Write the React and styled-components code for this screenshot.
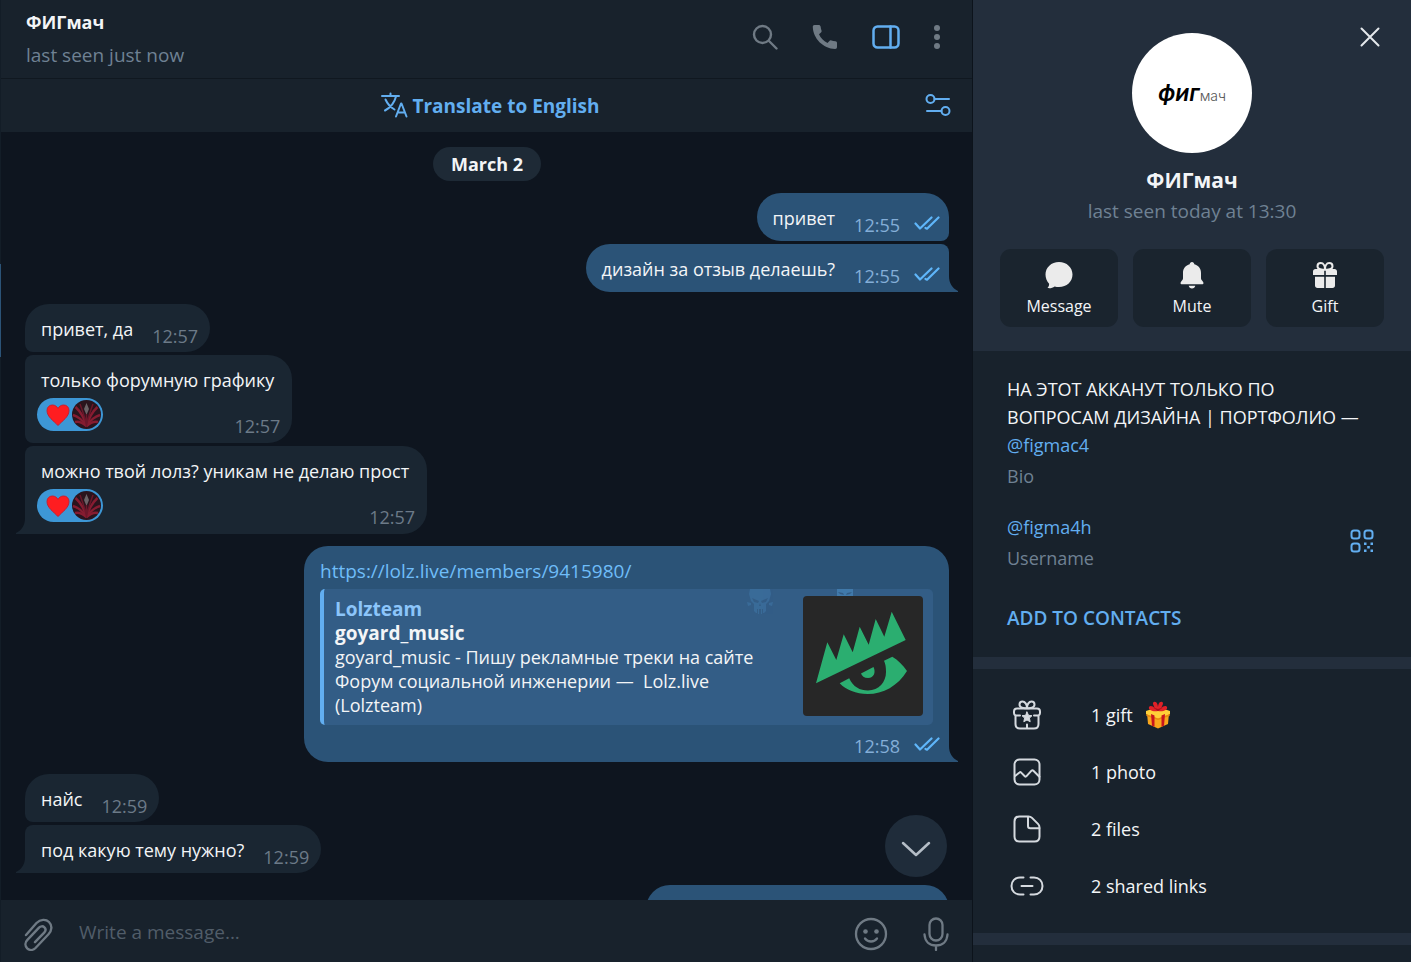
import React from 'react';
import styled, { createGlobalStyle } from 'styled-components';

const colors = {
    bar: '#18222c',
    chat: '#0e151f',
    incoming: '#1a2632',
    outgoing: '#2b5377',
    card: '#335d86',
    panel: '#232e3c',
    accent: '#62aef0',
    muted: '#6f8193',
    icon: '#6f7a84',
    text: '#f3f5f7',
}

const GlobalStyle = createGlobalStyle`
    * {
        box-sizing: border-box;
    }
    body {
        margin: 0;
        background-color: ${colors.chat};
        color: ${colors.text};
        font-family: "Open Sans", "Noto Sans", sans-serif;
        font-size: 18px;
        line-height: 24px;
    }
    button, input {
        font: inherit;
        color: inherit;
        border: none;
        background: none;
        padding: 0;
        outline: none;
    }
    button {
        cursor: pointer;
    }
    a {
        text-decoration: none;
    }
    h1, h2, p, ul {
        margin: 0;
        padding: 0;
    }
    svg {
        display: block;
        flex-shrink: 0;
    }
`

const Page = styled.div`
    display: flex;
    height: 100vh;
    overflow: hidden;
`

const Chat = styled.main`
    position: relative;
    flex: 1;
    min-width: 0;
    display: flex;
    flex-direction: column;
    border-left: 1px solid #131d27;
    border-right: 1px solid #0c131b;
`

const ActiveMark = styled.span`
    position: absolute;
    left: -1px;
    top: 264px;
    width: 1px;
    height: 93px;
    background-color: #2b5377;
`

const Header = styled.header`
    display: flex;
    align-items: center;
    justify-content: space-between;
    height: 79px;
    padding: 0 32px 2px 25px;
    background-color: ${colors.bar};
    border-bottom: 1px solid #101820;
`

const HeaderTitle = styled.h1`
    font-size: 18px;
    line-height: 24px;
    font-weight: 700;
    margin-bottom: 9px;
`

const Status = styled.p`
    color: ${colors.muted};
    font-size: 19px;
`

const HeaderTools = styled.div`
    display: flex;
    align-items: center;
    gap: 34px;
    padding-bottom: 2px;
`

const IconButton = styled.button`
    display: flex;
    align-items: center;
    justify-content: center;
    color: ${props => props.$color || colors.icon};
`

const TranslateBar = styled.div`
    display: grid;
    grid-template-columns: 26px 1fr 26px;
    align-items: center;
    height: 53px;
    padding: 0 21px 0 28px;
    background-color: ${colors.bar};
`

const TranslateButton = styled.button`
    grid-column: 2;
    display: flex;
    align-items: center;
    justify-content: center;
    gap: 4px;
    color: ${colors.accent};
    font-size: 19px;
    font-weight: 700;
`

const MessagesArea = styled.section`
    position: relative;
    flex: 1;
    min-height: 0;
    overflow: hidden;
    display: flex;
    flex-direction: column;
    gap: 12px;
    padding: 15px 23px 0 24px;
    background-color: ${colors.chat};
`

const DatePill = styled.div`
    align-self: center;
    flex-shrink: 0;
    height: 34px;
    padding: 0 18px;
    border-radius: 17px;
    background-color: #1e2a36;
    font-weight: 700;
    line-height: 34px;
`

const Group = styled.div`
    display: flex;
    flex-direction: column;
    flex-shrink: 0;
    align-items: ${props => props.$out ? 'flex-end' : 'flex-start'};
    gap: 3px;
`

const Bubble = styled.article`
    position: relative;
    min-height: 48px;
    padding: 13px 18px 11px 16px;
    max-width: 645px;
    background-color: ${props => props.$out ? colors.outgoing : colors.incoming};
    border-radius: ${props => props.$corners};
`

const WideBubble = styled(Bubble)`
    width: 100%;
    padding-right: 16px;
`

const ClippedBubble = styled(Bubble)`
    width: 303px;
`

const Line = styled.div`
    display: flex;
    justify-content: space-between;
    gap: 19px;
`

const ReactionLine = styled(Line)`
    margin: 6px 0 1px -4px;
`

const Meta = styled.div`
    display: flex;
    align-items: center;
    align-self: flex-end;
    justify-content: flex-end;
    gap: 14px;
    margin: 0 ${props => props.$in ? '-6px' : '-9px'} -7px 0;
    color: ${props => props.$in ? '#6c7a88' : '#84aed8'};

    svg {
        margin-bottom: 2px;
    }
`

const CardMeta = styled(Meta)`
    margin: 9px -7px -7px 0;
`

const Reaction = styled.button`
    display: flex;
    align-items: center;
    gap: 2px;
    width: 66px;
    height: 33px;
    padding-left: 9px;
    border-radius: 17px;
    background-color: #3d97d6;
`

const MessageLink = styled.a`
    color: #6fbdf9;
    font-size: 19px;
`

const Card = styled.div`
    position: relative;
    overflow: hidden;
    display: flex;
    justify-content: space-between;
    gap: 24px;
    margin-top: 6px;
    padding: 7px 10px 9px 11px;
    border-left: 4px solid ${colors.accent};
    border-radius: 5px;
    background-color: ${colors.card};
`

const CardText = styled.div`
    position: relative;
    min-width: 0;
    padding-top: 1px;
    margin-bottom: -1px;
`

const CardTitle = styled.p`
    color: ${props => props.$site ? '#8cc5fa' : 'inherit'};
    font-size: 19px;
    font-weight: 700;
`

const Watermark = styled.span`
    position: absolute;
    top: 0;
    right: ${props => props.$right};
    color: #4079aa;
`

const ScrollDown = styled.button`
    position: absolute;
    right: 25px;
    bottom: 23px;
    width: 62px;
    height: 62px;
    border-radius: 50%;
    display: flex;
    align-items: center;
    justify-content: center;
    padding-top: 5px;
    background-color: #1f2c3a;
    color: #b4bdc6;
`

const Composer = styled.form`
    display: flex;
    align-items: center;
    height: 62px;
    padding: 6px 23px 0 22px;
    background-color: ${colors.bar};
`

const MessageInput = styled.input`
    flex: 1;
    min-width: 0;
    height: 56px;
    padding: 0 0 5px;
    margin: 0 25px;
    font-size: 19px;

    &::placeholder {
        color: #515d69;
        opacity: 1;
    }
`

const ComposerTools = styled.div`
    display: flex;
    align-items: center;
    gap: 35px;
`

const Panel = styled.aside`
    flex: 0 0 438px;
    display: flex;
    flex-direction: column;
    background-color: ${colors.bar};
`

const Profile = styled.section`
    position: relative;
    display: flex;
    flex-direction: column;
    align-items: center;
    padding: 33px 27px 24px;
    background-color: ${colors.panel};
`

const CloseButton = styled(IconButton)`
    position: absolute;
    top: 26px;
    right: 30px;
`

const Avatar = styled.div`
    display: flex;
    align-items: center;
    justify-content: center;
    width: 120px;
    height: 120px;
    border-radius: 50%;
    background-color: #fff;
    color: #000;
    font-family: Inter, sans-serif;
    font-size: 23px;
    font-style: italic;
    font-weight: 600;
`

const AvatarSmall = styled.span`
    color: #555;
    font-size: 14px;
    font-style: normal;
    font-weight: 300;
    padding-top: 5px;
`

const ProfileName = styled.h2`
    margin-top: 12px;
    font-size: 21px;
    line-height: 30px;
    font-weight: 700;
`

const ProfileStatus = styled(Status)`
    margin: 4px 0 26px;
`

const Actions = styled.div`
    display: grid;
    grid-template-columns: repeat(3, 1fr);
    gap: 15px;
    width: 100%;
`

const Action = styled.button`
    display: flex;
    flex-direction: column;
    align-items: center;
    gap: 5px;
    height: 78px;
    padding-top: 12px;
    border-radius: 11px;
    background-color: #1a242e;
    font-size: 16px;
`

const Info = styled.section`
    padding: 24px 34px 25px;
    line-height: 28px;
`

const Link = styled.a`
    color: ${colors.accent};
`

const Label = styled.p`
    margin-top: 3px;
    color: ${colors.muted};
`

const UsernameRow = styled.div`
    display: flex;
    align-items: center;
    justify-content: space-between;
    margin: 23px 3px 32px 0;
`

const QrButton = styled(IconButton)`
    padding-bottom: 4px;
`

const AddButton = styled.button`
    display: block;
    color: ${colors.accent};
    font-size: 19px;
    font-weight: 600;
    line-height: 28px;
`

const Divider = styled.div`
    height: 12px;
    background-color: ${colors.panel};
`

const MediaList = styled.ul`
    padding: 17px 0 19px;
    list-style: none;
`

const MediaItem = styled.li`
    display: flex;
    align-items: center;
    gap: 44px;
    height: 57px;
    padding: 0 34px;
`

const MediaIcon = styled.span`
    display: flex;
    justify-content: center;
    width: 40px;
    color: #d5dadf;
`

const MediaText = styled.span`
    display: flex;
    align-items: center;
    gap: 12px;
`

const Icon = ({ w, h, stroke = 2, children }) => (
    <svg
        width={w}
        height={h}
        viewBox={`0 0 ${w} ${h}`}
        fill="none"
        stroke="currentColor"
        strokeWidth={stroke}
        strokeLinecap="round"
        strokeLinejoin="round"
        aria-hidden="true">
        {children}
    </svg>
)

const SearchIcon = () => (
    <Icon w={26} h={26} stroke={2.4}>
        <circle cx="10.5" cy="10.5" r="8.5" />
        <path d="M17 17l7.500 7.500" />
    </Icon>
)

const PhoneIcon = () => (
    <Icon w={26} h={26} stroke={0}>
        <path fill="currentColor" d="M2.500 1h4.200c1 0 1.700.6 1.900 1.600.2 1.600.5 2.800.9 4 .3.8.1 1.500-.5 2l-2 1.700c1.800 4 4.400 6.700 8.500 8.600l1.900-2c.5-.6 1.200-.8 2-.5 1.300.4 2.600.7 4 .9 1 .1 1.600.8 1.600 1.800v4c0 1.200-.7 1.900-1.900 1.900C11 24.500 1.200 14.500.8 3 .7 1.700 1.400 1 2.500 1z" />
    </Icon>
)

const PanelIcon = () => (
    <Icon w={28} h={24}>
        <rect x="1.500" y="1.500" width="25" height="21" rx="4" strokeWidth="2.500" />
        <path d="M18.500 1.500v21" strokeWidth="2.500" />
    </Icon>
)

const DotsIcon = () => (
    <Icon w={6} h={26} stroke={0}>
        <g fill="currentColor">
            <circle cx="3" cy="4" r="3" />
            <circle cx="3" cy="13" r="3" />
            <circle cx="3" cy="22" r="3" />
        </g>
    </Icon>
)

const TranslateIcon = () => (
    <Icon w={28} h={28}>
        <path d="M2 4h17M10.500 1.500V4M5.500 7.500c2 4.500 5.500 8 9 10M16 4.500c-1.500 6-5.500 11-11 14" />
        <path d="M16 24.500l5-13h.500l5 13M17.800 20.500h7" />
    </Icon>
)

const SlidersIcon = () => (
    <Icon w={26} h={26}>
        <circle cx="5.500" cy="6" r="4" />
        <path d="M9.500 6h14.500M2 18h14.500" />
        <circle cx="20.500" cy="18" r="4" />
    </Icon>
)

const Ticks = () => (
    <svg width="26" height="16" viewBox="0 0 26 16" fill="none" stroke="#5fb6fa" strokeWidth="2.200" strokeLinecap="round" strokeLinejoin="round" role="img" aria-label="Read">
        <path d="M1.500 7.500L6 12.500 17.500 1.500M11.500 12l1.500.7L24.500 1.500" />
    </svg>
)

const Heart = () => (
    <svg width="24" height="24" viewBox="0 0 24 24" role="img" aria-label="Heart">
        <path fill="#ff1d20" stroke="#c72031" d="M12 22.500C8 18 1 14 1 7.500 1 4 3.500 2 6.500 2 9 2 11 3.500 12 5.500 13 3.500 15 2 17.500 2 20.500 2 23 4 23 7.500 23 14 16 18 12 22.500z" />
    </svg>
)

const ReactorAvatar = () => (
    <svg width="29" height="29" viewBox="0 0 29 29" aria-hidden="true">
        <circle cx="14.500" cy="14.500" r="14.500" fill="#2a141d" />
        <path d="M14.500 3l2.500 6-2.500 6-2.500-6z" fill="#6b6367" />
        <g fill="none" stroke="#861c31" strokeWidth="2.500">
            <path d="M14.500 26C13 19 8 11 3.500 7M14.500 26C16 19 21 11 25.500 7" />
            <path d="M14.500 26C11 20 5 16 1 15M14.500 26c3.500-6 9.500-10 13.500-11" />
            <path d="M14.500 26C11 23 6 21 3 22M14.500 26c3.500-3 8.500-5 11.500-4" />
        </g>
        <path d="M14.500 25C13 18 11 12 8 4M14.500 25c1.500-7 3.500-13 6.500-21M14.500 27V14" fill="none" stroke="#6b172a" strokeWidth="1.500" />
    </svg>
)

const TailShape = styled.svg`
    position: absolute;
    bottom: 0;
    ${props => props.$out ? 'right: -9px;' : 'left: -9px;'}
    transform: ${props => props.$out ? 'none' : 'scaleX(-1)'};
    color: ${props => props.$out ? colors.outgoing : colors.incoming};
`

const Tail = ({ out }) => (
    <TailShape $out={out} width="9" height="16" viewBox="0 0 9 16" aria-hidden="true">
        <path fill="currentColor" d="M0 0c0 7 3 12 9 15v1H0z" />
    </TailShape>
)

const Skull = () => (
    <svg width="26" height="26" viewBox="0 0 26 26" fill="currentColor" opacity="0.500" aria-hidden="true">
        <path fillRule="evenodd" d="M3 0h20l1 5-2 7-3 3v7l-2 2h-1v-4h-1v5h-1v-5h-2v5h-1v-5h-1v4H9l-2-2v-7l-3-3-2-7zM5 9l2 4 4 1 1-2zM21 9l-2 4-4 1-1-2zM13 14l-1 3h2z" />
        <path d="M0 13l4 1v2l-3 1zM26 13l-4 1v2l3 1z" />
    </svg>
)

const SkullTop = () => (
    <svg width="16" height="7" viewBox="0 0 16 7" fill="currentColor" aria-hidden="true">
        <path fillRule="evenodd" d="M0 0h16v7H0zM1 3l2 2 4 1-1-2zM15 3l-2 2-4 1 1-2z" />
    </svg>
)

const LolzLogo = () => (
    <svg width="120" height="120" viewBox="0 0 120 120" role="img" aria-label="Lolzteam">
        <rect width="120" height="120" rx="4" fill="#272727" />
        <g fill="#2bae70">
            <path d="M13 87.300L24.300 46.300 33.300 64 40.700 38.300 49.700 56.300 56.700 30.700 65.700 48.700 72.700 23 81.300 40.700 88.700 15.700 102.700 44z" />
            <path d="M36.700 87.300l9.500-5C50 91 57 94.500 65 94.500c11 0 18-8.500 18-18.500 0-5-.5-8-2-11.300l8.300-4C95 64 100 69 104 75 95 90 80 98 64.700 98 53 98 43 94 36.700 87.300z" />
            <path d="M58 77.500l12.500-6.500c2.500 5 .5 11-5.500 11-4 0-6-2-7-4.500z" />
        </g>
    </svg>
)

const ClipIcon = () => (
    <Icon w={31} h={34} stroke={2.4}>
        <path d="M3 18L13.500 6c4-4 9.500-4 12.500-1 3.500 3.500 3 8.500-.5 12.200L12.500 31c-2.500 2.500-6 2.500-8.300.3-2.500-2.500-2.200-6 .2-8.500L16 10.600c1.500-1.600 4-1.700 5.400-.3 1.500 1.500 1.300 3.700-.2 5.300L12 25.200" />
    </Icon>
)

const SmileIcon = () => (
    <Icon w={34} h={34} stroke={2.3}>
        <circle cx="17" cy="17" r="15" />
        <g fill="currentColor" stroke="none">
            <circle cx="11.500" cy="14.500" r="2.300" />
            <circle cx="22.500" cy="14.500" r="2.300" />
        </g>
        <path d="M11 21.500c3 4 9 4 12 0" />
    </Icon>
)

const MicIcon = () => (
    <Icon w={26} h={34} stroke={2.3}>
        <rect x="6.500" y="1.500" width="13" height="22" rx="6.500" />
        <path d="M1.500 17.500C2 25 7 28.500 13 28.500S24 25 24.500 17.500M13 28.500V33" />
    </Icon>
)

const BubbleIcon = () => (
    <Icon w={28} h={28} stroke={0}>
        <path fill="#ebebeb" d="M14 1c7.700 0 13.500 5.500 13.500 12.500S21.700 26 14 26c-1.500 0-3-.2-4.300-.6C7.500 27 5 27.400 2.500 27c1.200-1.200 1.700-2.600 1.600-4.300C1.800 20.400.5 17 .5 13.500.5 6.500 6.300 1 14 1z" />
    </Icon>
)

const BellIcon = () => (
    <Icon w={28} h={28} stroke={0}>
        <path fill="#ebebeb" d="M14 1c1.300 0 2.300 1 2.300 2.300 4 1 6.700 4.200 6.700 8.700v5.500c0 1.500 2.500 3 2.500 4.500 0 .9-.6 1.300-1.500 1.300H4c-.9 0-1.500-.4-1.500-1.300C2.500 20.500 5 19 5 17.500V12c0-4.500 2.700-7.700 6.700-8.700C11.700 2 12.700 1 14 1zM10.700 24.800h6.600c-.3 1.600-1.600 2.600-3.300 2.600s-3-1-3.300-2.600z" />
    </Icon>
)

const GiftIcon = () => (
    <Icon w={28} h={28} stroke={0}>
        <g fill="#ebebeb">
            <path d="M4.500 8h8.700v6H2v-3.500C2 9 3 8 4.500 8zM14.800 8h8.700C25 8 26 9 26 10.500V14H14.800zM4 15.800h9.200V27H6.500C5 27 4 26 4 24.500zM14.800 15.800H24v8.700c0 1.500-1 2.500-2.500 2.500h-6.700z" />
        </g>
        <g fill="none" stroke="#ebebeb" strokeWidth="2">
            <path d="M14 8.500C11 9 6.500 8.500 6.500 5.200 6.500 3 8 2 9.800 2 12.500 2 14 5 14 8.500zM14 8.500c3 .5 7.500 0 7.500-3.300C21.500 3 20 2 18.200 2 15.500 2 14 5 14 8.500z" />
        </g>
    </Icon>
)

const QrIcon = () => (
    <Icon w={24} h={24}>
        <rect x="1.500" y="1.500" width="8" height="8" rx="2.500" />
        <rect x="14.500" y="1.500" width="8" height="8" rx="2.500" />
        <rect x="1.500" y="14.500" width="8" height="8" rx="2.500" />
        <path stroke="none" fill="currentColor" d="M14 13.500h2.500V16H14zM20.500 13.500H23V16h-2.500zM17.200 17h2.600v2.600h-2.600zM14 20.500h2.500V23H14zM20.500 20.500H23V23h-2.500z" />
    </Icon>
)

const GiftStarIcon = () => (
    <Icon w={28} h={30}>
        <path d="M2.500 15.500C1.500 15 1 14 1 13v-1.500C1 9.500 2 8.500 4 8.500h20c2 0 3 1 3 3V13c0 1-.5 2-1.500 2.500M2.500 15.500V24c0 3 1.500 4.500 4.500 4.500h14c3 0 4.500-1.500 4.500-4.500v-8.500M2.500 15.500H7M21 15.500h4.500M14 24.500v4" />
        <path d="M14 8C11 8.500 6.500 8 6.500 4.500 6.500 2.500 8 1.500 9.500 1.500 12 1.500 14 4.500 14 8c0-3.500 2-6.500 4.500-6.500 1.500 0 3 1 3 3C21.500 8 17 8.500 14 8z" />
        <path fill="currentColor" strokeWidth="1" d="M14 12l1.500 3.300 3.500.4-2.600 2.400.8 3.600L14 20l-3.200 1.700.8-3.600L9 15.700l3.500-.4z" />
    </Icon>
)

const PhotoIcon = () => (
    <Icon w={28} h={28}>
        <rect x="1.500" y="1.500" width="25" height="25" rx="5" />
        <path d="M2 18l4.500-3.500c.6-.5 1.200-.4 1.700.1l3.600 3.600c.6.6 1.200.6 1.700 0l5-5.500c.6-.6 1.300-.6 1.900 0l6 6" />
    </Icon>
)

const FileIcon = () => (
    <Icon w={28} h={28}>
        <path d="M6.500 1.500h9c1.500 0 2.500.4 3.500 1.400l6 6c1 1 1.500 2 1.500 3.500v9c0 3.400-1.700 5.100-5 5.100h-15c-3.300 0-5-1.700-5-5.100v-15c0-3.300 1.700-4.900 5-4.900z" />
        <path d="M15 2v9c0 1.500.7 2.300 2.300 2.300h9" />
    </Icon>
)

const LinkIcon = () => (
    <Icon w={34} h={20}>
        <path d="M13.500 1.500H10C5 1.500 1.500 5 1.500 10S5 18.500 10 18.500h3.500M20.500 1.500H24c5 0 8.500 3.500 8.500 8.500s-3.500 8.500-8.500 8.500h-3.500M11.500 10h11" />
    </Icon>
)

const GiftEmoji = () => (
    <svg width="26" height="28" viewBox="0 0 26 28" role="img" aria-label="Gift">
        <path fill="#f9a61c" d="M2 12l11 4 11-4-1 11-10 4.500L3 23z" />
        <path fill="#ffd038" d="M1 10l12-4 12 4v3l-12 4.500L1 13z" />
        <path fill="#e88a12" d="M1 13l12 4.500L25 13l-.5 2L13 19 1.500 15z" />
        <path fill="#c8141d" d="M6 13l3.500 1.500V25.700L7 24.700zM20 13l-3.500 1.500v11.200l2.500-1z" />
        <path fill="#e02128" d="M13 10C8 11 3 9 4 6c1-2 4-1 6 1C8 4 7 1 9.500.7 12 .5 13 4 13 7c0-3 1-6.500 3.500-6.300C19 1 18 4 16 7c2-2 5-3 6-1 1 3-4 5-9 4z" />
        <path fill="#a50f1b" d="M13 10L8 6.500 13 8l5-1.500z" />
    </svg>
)

const HeartReaction = () => (
    <Reaction type="button" aria-label="Heart reaction">
        <Heart />
        <ReactorAvatar />
    </Reaction>
)

const media = [
    { icon: <GiftStarIcon />, text: '1 gift', extra: <GiftEmoji /> },
    { icon: <PhotoIcon />, text: '1 photo' },
    { icon: <FileIcon />, text: '2 files' },
    { icon: <LinkIcon />, text: '2 shared links' },
]

// A message is either one line with its time, or a line with reactions under it
const Message = ({ out, text, time, corners, tail, reaction }) => {

    const meta = (
        <Meta $in={!out}>
            <time>{time}</time>
            {out && <Ticks />}
        </Meta>
    )

    return (
        <Bubble $out={out} $corners={corners}>
            {reaction ? (
                <>
                    <p>{text}</p>
                    <ReactionLine>
                        <HeartReaction />
                        {meta}
                    </ReactionLine>
                </>
            ) : (
                <Line>
                    <p>{text}</p>
                    {meta}
                </Line>
            )}
            {tail && <Tail out={out} />}
        </Bubble>
    )
}

const LinkMessage = () => (
    <WideBubble $out $corners="24px 24px 0 24px">
        <p>
            <MessageLink href="#member">https://lolz.live/members/9415980/</MessageLink>
        </p>
        <Card>
            <Watermark $right="160px"><Skull /></Watermark>
            <Watermark $right="80px"><SkullTop /></Watermark>
            <CardText>
                <CardTitle $site>Lolzteam</CardTitle>
                <CardTitle>goyard_music</CardTitle>
                <p>goyard_music - Пишу рекламные треки на сайте Форум социальной инженерии —&nbsp; Lolz.live (Lolzteam)</p>
            </CardText>
            <LolzLogo />
        </Card>
        <CardMeta>
            <time>12:58</time>
            <Ticks />
        </CardMeta>
        <Tail out />
    </WideBubble>
)

const ChatView = () => (
    <Chat>
        <Header>
            <div>
                <HeaderTitle>ФИГмач</HeaderTitle>
                <Status>last seen just now</Status>
            </div>
            <HeaderTools>
                <IconButton type="button" aria-label="Search"><SearchIcon /></IconButton>
                <IconButton type="button" aria-label="Call"><PhoneIcon /></IconButton>
                <IconButton type="button" aria-label="Toggle info" $color={colors.accent}><PanelIcon /></IconButton>
                <IconButton type="button" aria-label="More"><DotsIcon /></IconButton>
            </HeaderTools>
        </Header>

        <TranslateBar>
            <TranslateButton type="button">
                <TranslateIcon />
                Translate to English
            </TranslateButton>
            <IconButton type="button" aria-label="Translation settings" $color={colors.accent}><SlidersIcon /></IconButton>
        </TranslateBar>

        <MessagesArea>
            <DatePill>March 2</DatePill>

            <Group $out>
                <Message out text="привет" time="12:55" corners="24px 24px 8px 24px" />
                <Message out text="дизайн за отзыв делаешь?" time="12:55" corners="24px 8px 0 24px" tail />
            </Group>

            <Group>
                <Message text="привет, да" time="12:57" corners="24px 24px 24px 8px" />
                <Message text="только форумную графику" time="12:57" corners="8px 24px 24px 8px" reaction />
                <Message text="можно твой лолз? уникам не делаю прост" time="12:57" corners="8px 24px 24px 0" reaction tail />
            </Group>

            <Group $out>
                <LinkMessage />
            </Group>

            <Group>
                <Message text="найс" time="12:59" corners="24px 24px 24px 8px" />
                <Message text="под какую тему нужно?" time="12:59" corners="8px 24px 24px 0" tail />
            </Group>

            <Group $out>
                <ClippedBubble $out $corners="24px" />
            </Group>

            <ScrollDown type="button" aria-label="Scroll down">
                <Icon w={30} h={18} stroke={2.5}>
                    <path d="M2 3l13 12L28 3" />
                </Icon>
            </ScrollDown>
        </MessagesArea>

        <Composer>
            <IconButton type="button" aria-label="Attach"><ClipIcon /></IconButton>
            <MessageInput type="text" placeholder="Write a message..." aria-label="Write a message" />
            <ComposerTools>
                <IconButton type="button" aria-label="Emoji"><SmileIcon /></IconButton>
                <IconButton type="button" aria-label="Voice message"><MicIcon /></IconButton>
            </ComposerTools>
        </Composer>
        <ActiveMark />
    </Chat>
)

const InfoPanel = () => (
    <Panel>
        <Profile>
            <CloseButton type="button" aria-label="Close" $color="#e4e8ec">
                <Icon w={22} h={22}>
                    <path d="M2.500 2.500l17 17M19.500 2.500l-17 17" />
                </Icon>
            </CloseButton>
            <Avatar>фиг<AvatarSmall>мач</AvatarSmall></Avatar>
            <ProfileName>ФИГмач</ProfileName>
            <ProfileStatus>last seen today at 13:30</ProfileStatus>
            <Actions>
                <Action type="button"><BubbleIcon />Message</Action>
                <Action type="button"><BellIcon />Mute</Action>
                <Action type="button"><GiftIcon />Gift</Action>
            </Actions>
        </Profile>

        <Info>
            <p>
                НА ЭТОТ АККАНУТ ТОЛЬКО ПО ВОПРОСАМ ДИЗАЙНА | ПОРТФОЛИО —{' '}
                <Link href="#figmac4">@figmac4</Link>
            </p>
            <Label>Bio</Label>
            <UsernameRow>
                <div>
                    <Link href="#figma4h">@figma4h</Link>
                    <Label>Username</Label>
                </div>
                <QrButton type="button" aria-label="QR code" $color={colors.accent}><QrIcon /></QrButton>
            </UsernameRow>
            <AddButton type="button">ADD TO CONTACTS</AddButton>
        </Info>

        <Divider />

        <MediaList>
            {media.map(item => (
                <MediaItem key={item.text}>
                    <MediaIcon>{item.icon}</MediaIcon>
                    <MediaText>{item.text}{item.extra}</MediaText>
                </MediaItem>
            ))}
        </MediaList>

        <Divider />
    </Panel>
)

export default function App() {
    return (
        <>
            <GlobalStyle />
            <Page>
                <ChatView />
                <InfoPanel />
            </Page>
        </>
    )
}
